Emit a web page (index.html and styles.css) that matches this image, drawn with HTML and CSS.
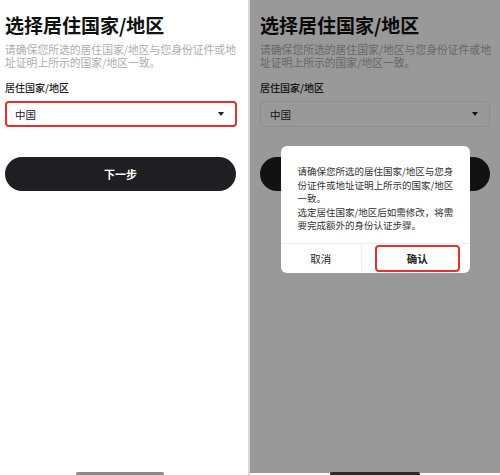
FILE: index.html
```html
<!DOCTYPE html>
<html lang="zh-CN">
<head>
  <meta charset="UTF-8">
  <title>选择居住国家/地区</title>
  <link rel="stylesheet" href="styles.css">
</head>
<body>
  <div class="phones">
    <div class="screen first">
      <h1 class="title">选择居住国家/地区</h1>
      <p class="hint">请确保您所选的居住国家/地区与您身份证件或地址证明上所示的国家/地区一致。</p>
      <div class="field-label">居住国家/地区</div>
      <div class="select marked">
        <span>中国</span>
        <span class="caret"></span>
      </div>
      <button class="next-btn">下一步</button>
      <div class="home-bar"></div>
    </div>

    <div class="screen second">
      <h1 class="title">选择居住国家/地区</h1>
      <p class="hint">请确保您所选的居住国家/地区与您身份证件或地址证明上所示的国家/地区一致。</p>
      <div class="field-label">居住国家/地区</div>
      <div class="select">
        <span>中国</span>
        <span class="caret"></span>
      </div>
      <!-- label is hidden behind the dialog -->
      <button class="next-btn"></button>

      <div class="overlay">
        <div class="dialog">
          <div class="dialog-text">
            <p>请确保您所选的居住国家/地区与您身份证件或地址证明上所示的国家/地区一致。</p>
            <p>选定居住国家/地区后如需修改，将需要完成额外的身份认证步骤。</p>
          </div>
          <div class="dialog-actions">
            <button class="dlg-btn">取消</button>
            <button class="dlg-btn confirm">确认</button>
          </div>
        </div>
      </div>
      <div class="home-bar dark"></div>
    </div>
  </div>
</body>
</html>
```

FILE: styles.css
```css
body {
  margin: 0;
  font-family: "Noto Sans CJK SC", "Noto Sans", sans-serif;
  background-color: #f4f4f4;
}

.phones {
  display: flex;
  width: 500px;
  height: 475px;
}

.screen {
  position: relative;
  height: 475px;
  background-color: #fff;
  box-sizing: border-box;
}

.first {
  width: 248px;
  padding: 0 5px;
}

.second {
  width: 252px;
  padding: 0 8px 0 10px;
  border-left: 2px solid #d8d8d8;
}

.title {
  margin: 12px 0 0;
  font-size: 19px;
  line-height: 26px;
  font-weight: bold;
  color: #111;
}

.hint {
  margin: 5px 0 0;
  font-size: 10.8px;
  line-height: 12.5px;
  color: #adadad;
}

.field-label {
  margin-top: 13px;
  font-size: 10px;
  line-height: 14px;
  font-weight: 500;
  color: #222;
}

.select {
  display: flex;
  align-items: center;
  justify-content: space-between;
  height: 26px;
  margin-top: 6px;
  padding: 0 11px 0 9px;
  border: 1px solid #ececec;
  border-radius: 4px;
  box-sizing: border-box;
  font-size: 10.5px;
  color: #222;
}

.select.marked {
  border: 2px solid #e8302a;
  padding-left: 8px;
  width: 232px;
}

.second .select {
  width: 230px;
}

.caret {
  width: 0;
  height: 0;
  border-left: 3px solid transparent;
  border-right: 3px solid transparent;
  border-top: 4px solid #222;
}

.next-btn {
  display: block;
  width: 230px;
  height: 34px;
  margin-top: 30px;
  background-color: #1f1f23;
  color: #fff;
  border: none;
  border-radius: 17px;
  font-family: inherit;
  font-size: 11px;
  font-weight: bold;
}

.first .next-btn {
  width: 231px;
}

.overlay {
  position: absolute;
  top: 0;
  left: 0;
  right: 0;
  bottom: 2px;
  background-color: rgba(0, 0, 0, 0.4);
  display: flex;
  justify-content: center;
  align-items: flex-start;
  padding-top: 146px;
  box-sizing: border-box;
}

.dialog {
  width: 189px;
  background-color: #fff;
  border-radius: 6px;
  overflow: hidden;
}

.dialog-text {
  padding: 19px 14px 10px 17px;
  font-size: 9.5px;
  line-height: 13.5px;
  color: #333;
}

.dialog-text p {
  margin: 0;
}

.dialog-actions {
  display: flex;
  height: 29px;
  border-top: 1px solid #eee;
}

.dlg-btn {
  flex: 1;
  background: none;
  border: none;
  font-family: inherit;
  font-size: 10.5px;
  color: #222;
  padding: 0;
}

.dlg-btn:first-child {
  border-right: 1px solid #eee;
}

.dlg-btn.confirm {
  font-weight: bold;
  margin: 1px 10px 1px 13px;
  border: 2px solid #e8302a;
  border-radius: 4px;
}

.home-bar {
  position: absolute;
  bottom: 0;
  left: 76px;
  width: 88px;
  height: 3px;
  border-radius: 2px 2px 0 0;
  background-color: #8a8a8a;
}

.home-bar.dark {
  left: 80px;
  width: 90px;
  background-color: #2a2a2a;
}
```
